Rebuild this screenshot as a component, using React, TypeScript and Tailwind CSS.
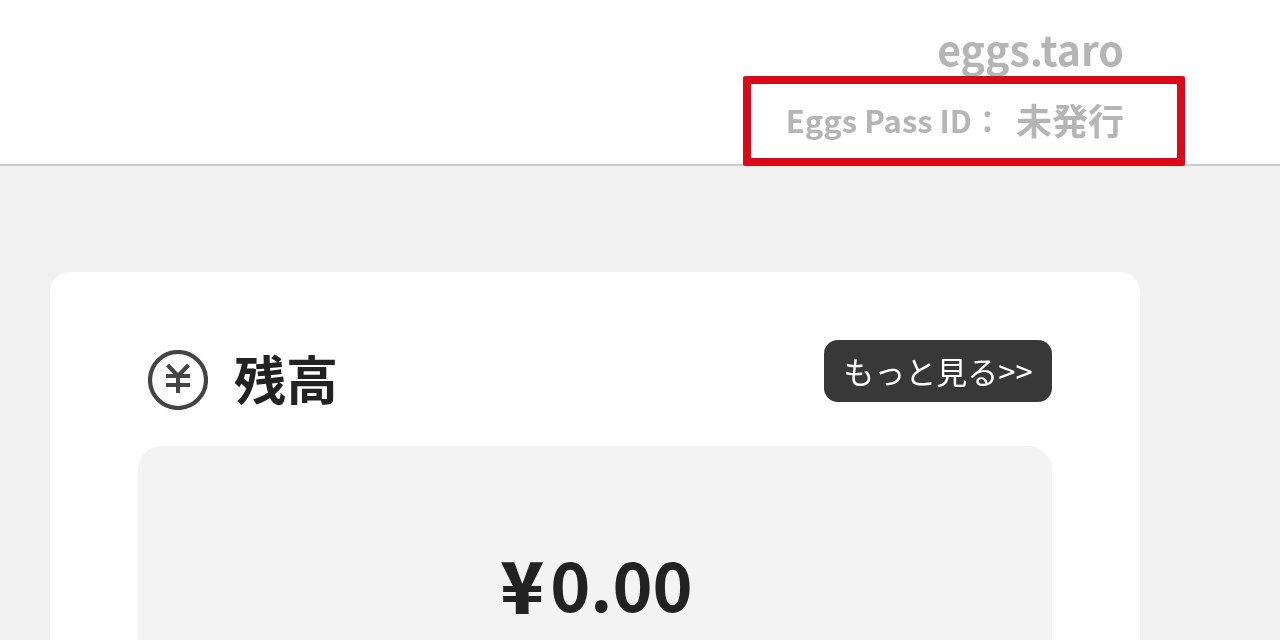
const font = "font-['Noto_Sans_CJK_JP','Noto_Sans',sans-serif]";

function YenIcon() {
  return (
    <svg width="60" height="60" viewBox="0 0 60 60" fill="none" stroke="#444444">
      <circle cx="30" cy="30" r="28" strokeWidth="4.2" />
      <path d="M19.5 15 L30 26 L40.5 15 M30 26 V43 M18 26 H42 M18 35 H42" strokeWidth="4" />
    </svg>
  );
}

export default function App() {
  return (
    <div className={`${font} h-[640px] w-[1280px] overflow-hidden bg-[#f1f1f1] will-change-transform`}>
      {/* Header */}
      <header className="relative h-[166px] border-b-2 border-[#cccccc] bg-white pr-[156px] text-right font-bold text-[#b5b5b5]">
        <div className="pt-[22px] text-[41px] leading-[52px]">eggs.taro</div>
        <div className="mt-[18px] flex items-center justify-end text-[31px] leading-[56px]">
          <span>Eggs Pass ID：</span>
          <span className="-mt-[3px] ml-[13px] text-[36px]">未発行</span>
        </div>
        <div className="absolute left-[743px] top-[76px] h-[90px] w-[442px] rounded-[2px] border-[8px] border-[#d90b18]" />
      </header>

      {/* Balance card */}
      <main className="pl-[50px] pt-[106px]">
        <section className="h-[400px] w-[1090px] rounded-[20px] bg-white px-[88px] pt-[68px]">
          <div className="flex h-[62px] items-start justify-between">
            <div className="flex items-center gap-[26px] pl-[10px] pt-[10px]">
              <YenIcon />
              <h2 className="-mt-[4px] text-[52px] font-bold leading-[60px] text-[#222222]">残高</h2>
            </div>
            <button className="h-[62px] w-[228px] rounded-[14px] bg-[#383838] text-[31px] leading-[60px] text-white">
              もっと見る&gt;&gt;
            </button>
          </div>
          <div className="mt-[44px] flex h-[300px] items-start justify-center rounded-[24px] bg-[#f3f3f3] pl-[3px] pt-[92px] text-[68px] font-bold leading-[90px] text-[#222222]">
            <span className="mr-[6px] text-[72px] font-black">¥</span>
            <span>0.00</span>
          </div>
        </section>
      </main>
    </div>
  );
}
